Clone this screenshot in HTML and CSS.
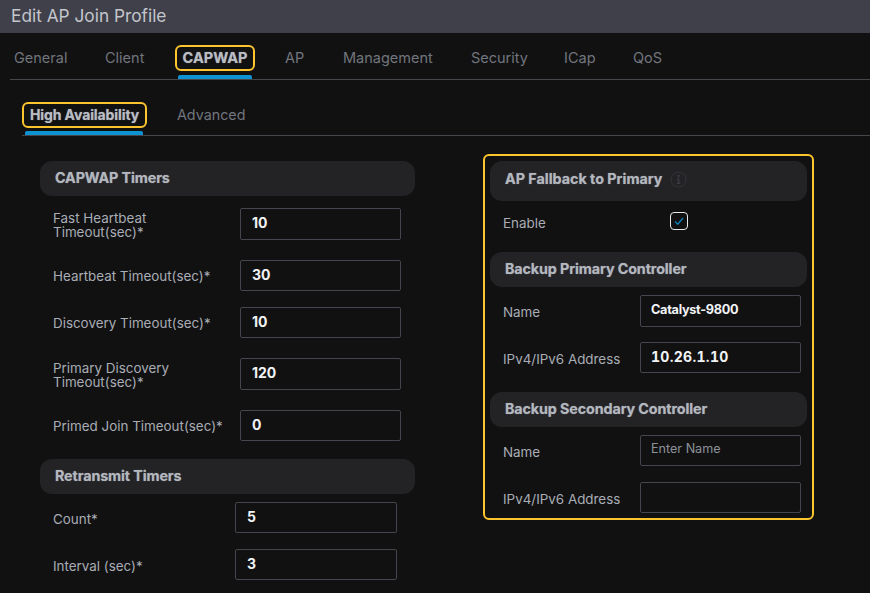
FILE: index.html
```html
<!DOCTYPE html>
<html lang="en">
<head>
  <meta charset="UTF-8">
  <title>Edit AP Join Profile</title>
  <link rel="stylesheet" href="styles.css">
</head>
<body>
  <div class="title">Edit AP Join Profile</div>
  <div class="tabs">
    <a class="tab" style="width:91px">General</a>
    <a class="tab" style="width:78px">Client</a>
    <a class="tab active" style="width:102px"><span>CAPWAP</span></a>
    <a class="tab" style="width:58px">AP</a>
    <a class="tab" style="width:128px">Management</a>
    <a class="tab" style="width:93px">Security</a>
    <a class="tab" style="width:69px">ICap</a>
    <a class="tab">QoS</a>
  </div>
  <div class="subtabs">
    <a class="subtab active"><span>High Availability</span></a>
    <a class="subtab">Advanced</a>
  </div>
  <div class="content">
    <div class="left">
      <div class="section">CAPWAP Timers</div>
      <div class="row mt12 tall"><label>Fast Heartbeat<br>Timeout(sec)*</label><input value="10"></div>
      <div class="row mt20"><label>Heartbeat Timeout(sec)*</label><input value="30"></div>
      <div class="row mt16"><label>Discovery Timeout(sec)*</label><input value="10"></div>
      <div class="row mt20 tall"><label>Primary Discovery<br>Timeout(sec)*</label><input value="120"></div>
      <div class="row mt20"><label>Primed Join Timeout(sec)*</label><input value="0"></div>
      <div class="section mt18">Retransmit Timers</div>
      <div class="row retransmit mt8"><label>Count*</label><input value="5"></div>
      <div class="row retransmit mt16"><label>Interval (sec)*</label><input value="3"></div>
    </div>
    <div class="right">
      <div class="section fallback">AP Fallback to Primary
        <svg class="info" width="17" height="17" viewBox="0 0 17 17">
          <circle cx="8.500" cy="8.500" r="7.500" fill="none" stroke="#33343a" stroke-width="1"/>
          <circle cx="8.500" cy="5" r="1.200" fill="#3c3d43"/>
          <path d="M7 7.500h2.300v4.500h1v1H6.800v-1h1v-3.500H7z" fill="#3c3d43"/>
        </svg>
      </div>
      <div class="row enable"><label>Enable</label>
        <span class="check">
          <svg width="12" height="12" viewBox="0 0 12 12"><path d="M2 6.500l2.800 2.700L10 3" fill="none" stroke="#0a7fb5" stroke-width="1.400"/></svg>
        </span>
      </div>
      <div class="section mt22">Backup Primary Controller</div>
      <div class="row wide tall mt8"><label>Name</label><input class="name" value="Catalyst-9800"></div>
      <div class="row wide mt15"><label>IPv4/IPv6 Address</label><input class="addr" value="10.26.1.10"></div>
      <div class="section mt19">Backup Secondary Controller</div>
      <div class="row wide mt8"><label>Name</label><input placeholder="Enter Name"></div>
      <div class="row wide mt16"><label>IPv4/IPv6 Address</label><input></div>
    </div>
  </div>
</body>
</html>
```

FILE: styles.css
```css
html, body {
  margin: 0;
  height: 593px;
  overflow: hidden;
}
body {
  background: #111112;
  color: #a9adb5;
  font-family: Inter, "Liberation Sans", sans-serif;
  font-size: 13.400px;
}
.title {
  height: 33px;
  padding-left: 11px;
  background: #40404b;
  color: #c3c6cc;
  font-size: 17.300px;
  line-height: 32px;
}
.tabs {
  display: flex;
  height: 46px;
  margin-left: 10px;
  padding-left: 4px;
  border-bottom: 1px solid #45464b;
}
.tab {
  color: #71757d;
  font-size: 14.500px;
  line-height: 50px;
  flex: none;
}
.tab.active {
  position: relative;
  color: #b9bdc4;
  font-weight: 700;
  text-shadow: 0 0 1px rgba(185, 189, 196, 0.6);
}
.tab.active span {
  position: absolute;
  left: -8px;
  top: 12px;
  width: 80px;
  height: 26px;
  box-sizing: border-box;
  border: 2px solid #fcc52d;
  border-radius: 6px;
  line-height: 22px;
  text-align: center;
}
.tab.active::after {
  content: "";
  position: absolute;
  left: -5px;
  top: 42px;
  width: 74px;
  height: 4px;
  background: #0d93d2;
  border-radius: 2px 2px 0 0;
}
.subtabs {
  display: flex;
  height: 55px;
  margin-left: 22px;
  border-bottom: 1px solid #45464b;
}
.subtab {
  color: #71757d;
  font-size: 14.300px;
  line-height: 70px;
}
.subtab.active {
  position: relative;
  width: 155px;
  color: #b9bdc4;
  font-size: 14px;
  font-weight: 700;
  letter-spacing: -0.1px;
  text-shadow: 0 0 1px rgba(185, 189, 196, 0.6);
}
.subtab.active span {
  position: absolute;
  left: 0;
  top: 22px;
  width: 125px;
  height: 26px;
  box-sizing: border-box;
  border: 2px solid #fcc52d;
  border-radius: 6px;
  line-height: 22px;
  text-align: center;
}
.subtab.active::after {
  content: "";
  position: absolute;
  left: 3px;
  top: 51px;
  width: 118px;
  height: 4px;
  background: #0d93d2;
  border-radius: 2px 2px 0 0;
}
.content {
  display: flex;
  align-items: flex-start;
  padding: 25px 0 0 40px;
}
.left {
  width: 375px;
  flex: none;
}
.right {
  width: 317px;
  flex: none;
  margin: -7px 0 0 68px;
  padding: 5px;
  border: 2px solid #fcc52d;
  border-radius: 6px;
}
.section {
  display: flex;
  align-items: center;
  box-sizing: border-box;
  height: 35px;
  padding: 0 0 2px 15px;
  background: #232326;
  border-radius: 12px;
  color: #b3b7be;
  font-size: 14.300px;
  font-weight: 700;
  letter-spacing: -0.1px;
  text-shadow: 0 0 1px rgba(179, 183, 190, 0.6);
}
.fallback {
  height: 40px;
  padding-bottom: 6px;
  letter-spacing: 0;
}
.info {
  margin: 3px 0 0 8px;
}
.row {
  display: grid;
  grid-template-columns: 187px 161px;
  align-items: center;
  padding-left: 13px;
}
.row label {
  line-height: 14px;
}
.row input {
  width: 161px;
  height: 31px;
  box-sizing: border-box;
  padding: 0 11px 3px;
  background: transparent;
  border: 1px solid #44454d;
  border-radius: 2px;
  color: #f2f3f5;
  font: 700 14px Inter, "Liberation Sans", sans-serif;
}
.row input.name {
  font-size: 12.700px;
  letter-spacing: -0.3px;
}
.row input.addr {
  font-size: 14px;
  font-feature-settings: "tnum";
  letter-spacing: 0.3px;
}
.row input::placeholder {
  color: #8d9199;
  font-weight: 400;
  font-size: 12.600px;
  opacity: 1;
}
.row input:placeholder-shown {
  padding-bottom: 6px;
}
.tall input {
  height: 32px;
}
.tall label {
  padding-top: 2px;
}
.retransmit {
  grid-template-columns: 182px 162px;
}
.retransmit input {
  width: 162px;
}
.retransmit label, .wide label {
  padding-top: 2px;
}
.wide {
  grid-template-columns: 137px 161px;
}
.row.wide input {
  padding-left: 10px;
}
.enable {
  grid-template-columns: 167px 18px;
  margin-top: 11px;
}
.enable label {
  padding-top: 4px;
}
.check {
  display: flex;
  align-items: center;
  justify-content: center;
  width: 18px;
  height: 18px;
  box-sizing: border-box;
  border: 1px solid #e6e7ea;
  border-radius: 4px;
}
.mt8 { margin-top: 8px; }
.mt12 { margin-top: 12px; }
.mt15 { margin-top: 15px; }
.mt16 { margin-top: 16px; }
.mt18 { margin-top: 18px; }
.mt19 { margin-top: 19px; }
.mt20 { margin-top: 20px; }
.mt22 { margin-top: 22px; }
```
